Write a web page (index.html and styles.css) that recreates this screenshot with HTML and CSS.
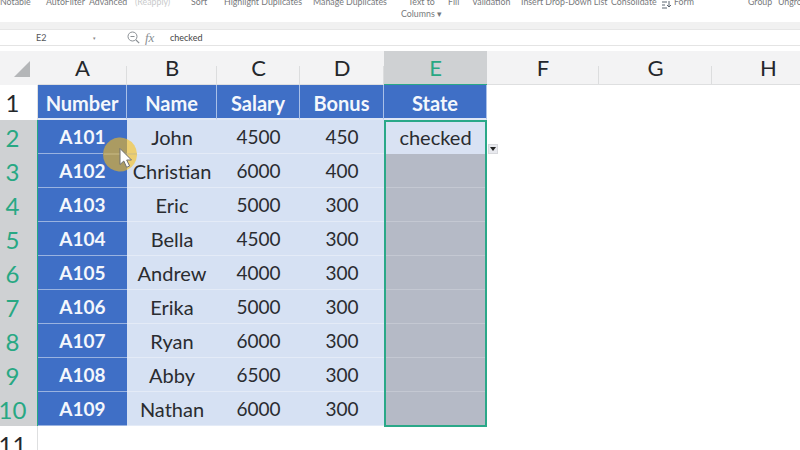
FILE: index.html
```html
<!DOCTYPE html>
<html lang="en">
<head>
<meta charset="utf-8">
<title>Spreadsheet</title>
<link rel="stylesheet" href="styles.css">
</head>
<body>
<div class="app">
  <div class="ribbon">
    <span class="r w33">Notable</span><span class="r w39 g13">AutoFilter</span><span class="r w38 g4">Advanced</span><span class="r w40 g8 faint">(Reapply)</span><span class="r w15 g16">Sort</span><span class="r w76 g18">Highlight Duplicates</span><span class="r w72 g13">Manage Duplicates</span>
    <span class="stack g18"><span class="r">Text to</span><span class="r">Columns ▾</span></span>
    <span class="r w10 g8">Fill</span><span class="r w37 g14">Validation</span><span class="r w82 g12">Insert Drop-Down List</span><span class="r w43 g8">Consolidate</span>
    <svg class="formicon" viewBox="0 0 12 10" aria-hidden="true"><path d="M1 2h5M1 5h3M1 8h5M8 1v6M6 5l2 2 2-2" fill="none" stroke="#5b6470" stroke-width="1"/></svg>
    <span class="r w20">Form</span><span class="r w22 g54">Group</span><span class="r w30 g8">Ungroup</span>
  </div>
  <div class="ribbon-edge"></div>
  <div class="formula">
    <span class="namebox">E2</span><span class="namecaret">▾</span>
    <svg class="zoomicon" viewBox="0 0 13 13" aria-hidden="true"><circle cx="5.5" cy="5.5" r="4.5" fill="none" stroke="#8a8f94" stroke-width="1"/><path d="M3.5 5.5h4M9 9l3.2 3.2" fill="none" stroke="#8a8f94" stroke-width="1.2"/></svg>
    <span class="fx">fx</span>
    <span class="ftext">checked</span>
  </div>
  <div class="sheet">
    <div class="corner"><svg class="tri" viewBox="0 0 16 16" aria-hidden="true"><path d="M16 0V16H0Z" fill="#b4b6b8"/></svg></div>
    <div class="ch">A</div><div class="ch">B</div><div class="ch">C</div><div class="ch">D</div><div class="ch ch-sel">E</div><div class="ch">F</div><div class="ch">G</div><div class="ch">H</div>

    <div class="rh rh-plain">1</div>
    <div class="hd">Number</div><div class="hd">Name</div><div class="hd">Salary</div><div class="hd">Bonus</div><div class="hd">State</div><div class="blank"></div><div class="blank"></div><div class="blank"></div>

    <div class="rh">2</div><div class="id">A101</div><div class="d">John</div><div class="d num">4500</div><div class="d num">450</div><div class="d active">checked</div><div class="blank"></div><div class="blank"></div><div class="blank"></div>
    <div class="rh">3</div><div class="id">A102</div><div class="d">Christian</div><div class="d num">6000</div><div class="d num">400</div><div class="sel"></div><div class="blank"></div><div class="blank"></div><div class="blank"></div>
    <div class="rh">4</div><div class="id">A103</div><div class="d">Eric</div><div class="d num">5000</div><div class="d num">300</div><div class="sel"></div><div class="blank"></div><div class="blank"></div><div class="blank"></div>
    <div class="rh">5</div><div class="id">A104</div><div class="d">Bella</div><div class="d num">4500</div><div class="d num">300</div><div class="sel"></div><div class="blank"></div><div class="blank"></div><div class="blank"></div>
    <div class="rh">6</div><div class="id">A105</div><div class="d">Andrew</div><div class="d num">4000</div><div class="d num">300</div><div class="sel"></div><div class="blank"></div><div class="blank"></div><div class="blank"></div>
    <div class="rh">7</div><div class="id">A106</div><div class="d">Erika</div><div class="d num">5000</div><div class="d num">300</div><div class="sel"></div><div class="blank"></div><div class="blank"></div><div class="blank"></div>
    <div class="rh">8</div><div class="id">A107</div><div class="d">Ryan</div><div class="d num">6000</div><div class="d num">300</div><div class="sel"></div><div class="blank"></div><div class="blank"></div><div class="blank"></div>
    <div class="rh">9</div><div class="id">A108</div><div class="d">Abby</div><div class="d num">6500</div><div class="d num">300</div><div class="sel"></div><div class="blank"></div><div class="blank"></div><div class="blank"></div>
    <div class="rh">10</div><div class="id">A109</div><div class="d">Nathan</div><div class="d num">6000</div><div class="d num">300</div><div class="sel"></div><div class="blank"></div><div class="blank"></div><div class="blank"></div>

    <div class="rh rh-plain">11</div>
  </div>
  <div class="selection"></div>
  <div class="dropbtn"><svg viewBox="0 0 6 4" aria-hidden="true"><path d="M0 0H6L3 4Z" fill="#222"/></svg></div>
  <svg class="pointer" viewBox="0 0 34 36" aria-hidden="true">
    <path d="M24 2A17 17 0 1 0 24 33Z" fill="#ab9b62"/>
    <path d="M24 2A17 17 0 0 1 24 33Z" fill="#ecce70"/>
    <path d="M1 17H34" stroke="#c9bb86" stroke-width="1"/>
    <path d="M17 11.5V27.5L20.8 24L23.6 30.3L26.6 29L23.7 23H28.5Z" fill="#fff" stroke="#6f6f6f" stroke-width="1"/>
  </svg>
</div>
</body>
</html>
```
FILE: styles.css
```css
* { box-sizing: border-box; }
html, body { margin: 0; padding: 0; }
body { width: 800px; height: 450px; overflow: hidden; background: #fff; font-family: "Lato", "Liberation Sans", sans-serif; }
.app { position: relative; width: 800px; height: 450px; overflow: hidden; background: #fff; }

.ribbon { display: flex; align-items: flex-start; height: 22px; background: #fff; overflow: hidden; font-size: 8.8px; color: #77797c; line-height: 12px; }
.r { display: block; white-space: nowrap; margin-top: -4px; flex: none; }
.stack { display: flex; flex-direction: column; align-items: center; width: 37px; flex: none; }
.stack .r { margin-top: 0; }
.stack .r:first-child { margin-top: -4px; }
.w10 { width: 10px; } .w15 { width: 15px; } .w20 { width: 20px; } .w22 { width: 22px; } .w30 { width: 30px; }
.w33 { width: 33px; } .w37 { width: 37px; } .w38 { width: 38px; } .w39 { width: 39px; } .w40 { width: 40px; } .w43 { width: 43px; }
.w72 { width: 72px; } .w76 { width: 76px; } .w82 { width: 82px; }
.g4 { margin-left: 4px; } .g8 { margin-left: 8px; } .g12 { margin-left: 12px; } .g13 { margin-left: 13px; } .g14 { margin-left: 14px; }
.g16 { margin-left: 16px; } .g18 { margin-left: 18px; } .g54 { margin-left: 54px; }
.faint { color: #c9cacc; }
.formicon { width: 12px; height: 10px; margin: 0 1px 0 7px; flex: none; }

.ribbon-edge { height: 8px; background: #f1f1f1; border-bottom: 1px solid #e6e6e6; }
.formula { display: flex; align-items: center; height: 16px; background: #fff; font-size: 9px; color: #55585c; border-bottom: 1px solid #e4e4e4; }
.namebox { margin-left: 36px; width: 57px; }
.namecaret { font-size: 5px; color: #888; width: 34px; }
.zoomicon { width: 13px; height: 13px; flex: none; }
.fx { font-family: "Liberation Serif", serif; font-style: italic; font-size: 13px; color: #8a8f94; margin-left: 5px; width: 25px; }
.ftext { color: #444; }

.sheet { display: grid; grid-template-columns: 38px 89px 90px 83px 84px 103px 112px 113px 113px; grid-template-rows: 34px 35px repeat(9, 34px) 36px; width: 825px; background: #fff; margin-top: 5px; }
.corner { background: #f3f3f4; display: flex; align-items: flex-end; justify-content: flex-end; padding: 0 8px 8px 0; }
.tri { width: 16px; height: 16px; display: block; }
.ch { background: #f3f3f4 linear-gradient(#dcddde, #dcddde) right bottom / 1px 18px no-repeat; border-bottom: 1px solid #dedfe0; font-size: 22px; color: #24272b; display: flex; align-items: center; justify-content: center; }
.ch-sel { background: #cfd1d3; color: #28a883; border-bottom: 1px solid #2aa888; }
.rh { background: #cfd1d3; color: #28a883; font-size: 24px; display: flex; align-items: center; justify-content: center; padding-right: 12px; border-right: 1px solid #28a883; }
.rh-plain { background: #fff; color: #24272b; border-right: 1px solid #dedfe0; }
.hd { background: #3f6fc6; color: #f4f7fc; font-size: 20px; font-weight: 700; display: flex; align-items: center; justify-content: center; padding-top: 2px; border-right: 1px solid #a9c0e8; border-bottom: 2px solid #dfe7f5; }
.id { background: #3f6fc6; color: #f4f7fc; font-size: 19px; font-weight: 700; display: flex; align-items: center; justify-content: center; border-bottom: 1px solid #9ab3e0; }
.d { background: #d6e1f3; color: #2a2c30; font-size: 20px; display: flex; align-items: center; justify-content: center; border-bottom: 1px solid #e4ebf7; }
.num { font-size: 19px; }
.active { background: #d9e2f3; border-bottom: 0; }
.sel { background: #b5bac6; border-bottom: 1px solid #c4c8d2; }
.blank { background: #fff; }

.selection { position: absolute; left: 384px; top: 120px; width: 103px; height: 307px; border: 2px solid #2aa888; pointer-events: none; }
.dropbtn { position: absolute; left: 488px; top: 144px; width: 10px; height: 10px; background: #e8e9ee; border: 1px solid #d8d9dd; display: flex; align-items: center; justify-content: center; }
.dropbtn svg { width: 6px; height: 4px; }
.pointer { position: absolute; left: 103px; top: 137px; width: 34px; height: 36px; }
```
